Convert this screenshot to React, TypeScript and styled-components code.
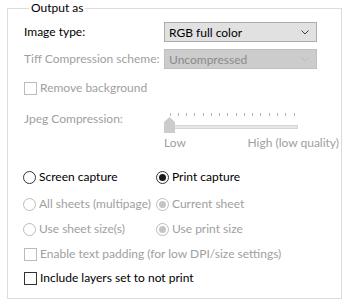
import styled, { createGlobalStyle } from 'styled-components';

const GlobalStyle = createGlobalStyle`
  html, body {
    margin: 0;
    padding: 0;
    background: #ffffff;
  }
  body {
    font-family: Lato, "Noto Sans", sans-serif;
    font-size: 12px;
    color: #000;
  }
`;

const TICKS = 16;

function Chevron({ disabled }: { disabled?: boolean }) {
  return (
    <svg width="8" height="5" viewBox="0 0 8 5" style={{ display: 'block' }}>
      <path d="M0.5 0.5 L4 4 L7.5 0.5" fill="none" stroke={disabled ? '#bdbdbd' : '#3c3c3c'} strokeWidth="1" />
    </svg>
  );
}

function QualitySlider() {
  const first = 5.5;
  const step = 124 / (TICKS - 1);
  return (
    <svg width="136" height="22" viewBox="0 0 136 22" style={{ display: 'block' }}>
      {Array.from({ length: TICKS }).map((_, i) => {
        const x = Math.round(first + step * i) + 0.5;
        return <line key={i} x1={x} y1="1" x2={x} y2="4" stroke="#b4b4b4" strokeWidth="1" />;
      })}
      <rect x="3.5" y="13.5" width="130" height="3" fill="#e7e7e7" stroke="#d6d6d6" />
      <path d="M0 21 L0 10 L5.5 5 L11 10 L11 21 Z" fill="#cccccc" />
    </svg>
  );
}

export default function App() {
  return (
    <>
      <GlobalStyle />
      <Page>
        <Group>
          <Legend>Output as</Legend>

          <FieldRow $top={0}>
            <Label>Image type:</Label>
            <Select>
              <span>RGB full color</span>
              <Chevron />
            </Select>
          </FieldRow>

          <FieldRow $top={7}>
            <Label $disabled>Tiff Compression scheme:</Label>
            <Select $disabled>
              <span>Uncompressed</span>
              <Chevron disabled />
            </Select>
          </FieldRow>

          <OptionRow $top={11}>
            <CheckBox $disabled />
            <OptionText $disabled>Remove background</OptionText>
          </OptionRow>

          <SliderRow>
            <Label $disabled>Jpeg Compression:</Label>
            <SliderBlock>
              <QualitySlider />
              <SliderLabels>
                <span>Low</span>
                <span>High (low quality)</span>
              </SliderLabels>
            </SliderBlock>
          </SliderRow>

          <RadioGrid $top={19}>
            <OptionItem>
              <Radio />
              <OptionText>Screen capture</OptionText>
            </OptionItem>
            <OptionItem>
              <Radio $checked />
              <OptionText>Print capture</OptionText>
            </OptionItem>
          </RadioGrid>

          <RadioGrid $top={11}>
            <OptionItem>
              <Radio $disabled />
              <OptionText $disabled>All sheets (multipage)</OptionText>
            </OptionItem>
            <OptionItem>
              <Radio $checked $disabled />
              <OptionText $disabled>Current sheet</OptionText>
            </OptionItem>
          </RadioGrid>

          <RadioGrid $top={9}>
            <OptionItem>
              <Radio $disabled />
              <OptionText $disabled>Use sheet size(s)</OptionText>
            </OptionItem>
            <OptionItem>
              <Radio $checked $disabled />
              <OptionText $disabled>Use print size</OptionText>
            </OptionItem>
          </RadioGrid>

          <OptionRow $top={9}>
            <CheckBox $disabled />
            <OptionText $disabled>Enable text padding (for low DPI/size settings)</OptionText>
          </OptionRow>

          <OptionRow $top={8}>
            <CheckBox />
            <OptionText>Include layers set to not print</OptionText>
          </OptionRow>
        </Group>
      </Page>
    </>
  );
}

const Page = styled.div`
  width: 345px;
  height: 304px;
  padding: 0 3px 0 7px;
  box-sizing: border-box;
`;

const Group = styled.fieldset`
  margin: 0;
  width: 335px;
  box-sizing: border-box;
  border: 1px solid #dcdcdc;
  padding: 6px 2px 12px 16px;
  display: flex;
  flex-direction: column;
`;

const Legend = styled.legend`
  padding: 0 2px;
  margin-left: 5px;
  line-height: 16px;
  color: #000;
`;

const FieldRow = styled.div<{ $top: number }>`
  display: flex;
  align-items: center;
  height: 20px;
  margin-top: ${(p) => p.$top}px;
`;

const Label = styled.span<{ $disabled?: boolean }>`
  width: 140px;
  flex-shrink: 0;
  line-height: 14px;
  color: ${(p) => (p.$disabled ? '#a0a0a0' : '#000')};
  white-space: nowrap;
`;

const Select = styled.div<{ $disabled?: boolean }>`
  width: 153px;
  height: 20px;
  box-sizing: border-box;
  display: flex;
  align-items: center;
  justify-content: space-between;
  padding: 0 7px 0 4px;
  background: ${(p) => (p.$disabled ? '#cccccc' : '#e1e1e1')};
  border: 1px solid ${(p) => (p.$disabled ? '#bfbfbf' : '#adadad')};
  color: ${(p) => (p.$disabled ? '#8a8a8a' : '#000')};
`;

const OptionRow = styled.div<{ $top: number }>`
  display: flex;
  align-items: center;
  height: 16px;
  margin-top: ${(p) => p.$top}px;
`;

const OptionItem = styled.div`
  display: flex;
  align-items: center;
  height: 16px;
`;

const RadioGrid = styled.div<{ $top: number }>`
  display: grid;
  grid-template-columns: 133px 1fr;
  margin-top: ${(p) => p.$top}px;
  margin-left: -1px;
`;

const OptionText = styled.span<{ $disabled?: boolean }>`
  margin-left: 3px;
  line-height: 14px;
  white-space: nowrap;
  color: ${(p) => (p.$disabled ? '#a0a0a0' : '#000')};
`;

const CheckBox = styled.span<{ $disabled?: boolean }>`
  width: 13px;
  height: 13px;
  box-sizing: border-box;
  flex-shrink: 0;
  background: #fff;
  border: 1px solid ${(p) => (p.$disabled ? '#bcbcbc' : '#333333')};
`;

const Radio = styled.span<{ $checked?: boolean; $disabled?: boolean }>`
  width: 13px;
  height: 13px;
  box-sizing: border-box;
  flex-shrink: 0;
  border-radius: 50%;
  background: #fff;
  border: 1px solid ${(p) => (p.$disabled ? '#bcbcbc' : '#333333')};
  display: flex;
  align-items: center;
  justify-content: center;

  &::after {
    content: '';
    display: ${(p) => (p.$checked ? 'block' : 'none')};
    width: 7px;
    height: 7px;
    border-radius: 50%;
    background: ${(p) => (p.$disabled ? '#c4c4c4' : '#1a1a1a')};
  }
`;

const SliderRow = styled.div`
  display: flex;
  align-items: flex-start;
  margin-top: 16px;
`;

const SliderBlock = styled.div`
  flex: 1;
  display: flex;
  flex-direction: column;
`;

const SliderLabels = styled.div`
  display: flex;
  justify-content: space-between;
  margin-top: 2px;
  line-height: 14px;
  color: #a0a0a0;
`;
